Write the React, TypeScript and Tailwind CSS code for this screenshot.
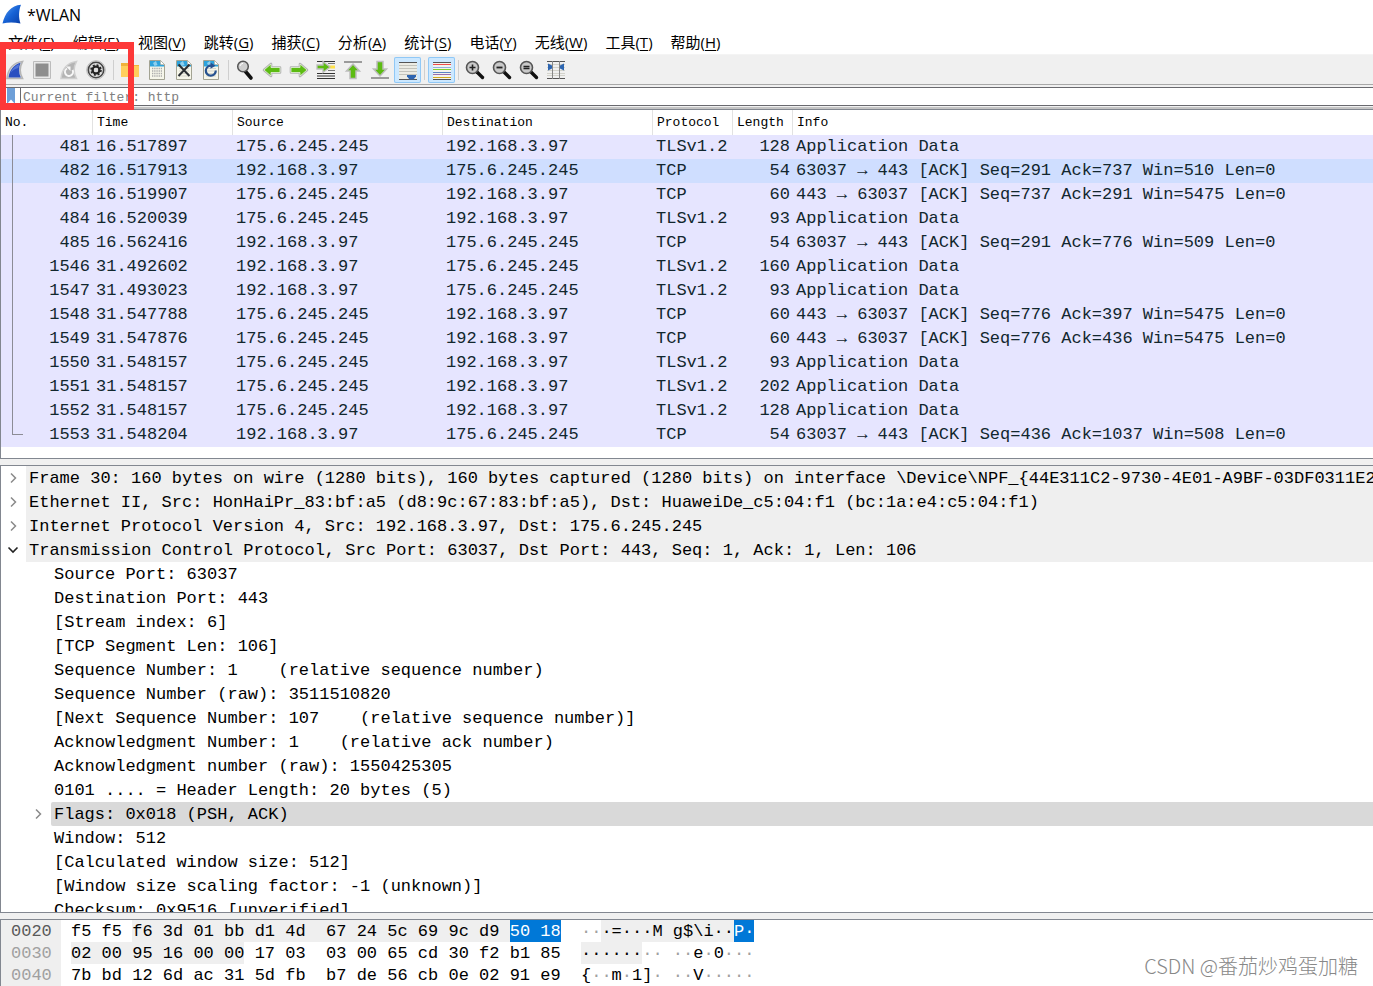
import { Fragment, ReactNode } from "react";

const MONO = "font-['Liberation_Mono',monospace]";
const UI = "font-['Open_Sans','Noto_Sans_CJK_SC',sans-serif]";

const menus: [string, string][] = [
  ["文件", "F"],
  ["编辑", "E"],
  ["视图", "V"],
  ["跳转", "G"],
  ["捕获", "C"],
  ["分析", "A"],
  ["统计", "S"],
  ["电话", "Y"],
  ["无线", "W"],
  ["工具", "T"],
  ["帮助", "H"],
];

const A = "175.6.245.245";
const B = "192.168.3.97";

type Packet = [number, string, string, string, string, number, string];

const packets: Packet[] = [
  [481, "16.517897", A, B, "TLSv1.2", 128, "Application Data"],
  [482, "16.517913", B, A, "TCP", 54, "63037 → 443 [ACK] Seq=291 Ack=737 Win=510 Len=0"],
  [483, "16.519907", A, B, "TCP", 60, "443 → 63037 [ACK] Seq=737 Ack=291 Win=5475 Len=0"],
  [484, "16.520039", A, B, "TLSv1.2", 93, "Application Data"],
  [485, "16.562416", B, A, "TCP", 54, "63037 → 443 [ACK] Seq=291 Ack=776 Win=509 Len=0"],
  [1546, "31.492602", B, A, "TLSv1.2", 160, "Application Data"],
  [1547, "31.493023", B, A, "TLSv1.2", 93, "Application Data"],
  [1548, "31.547788", A, B, "TCP", 60, "443 → 63037 [ACK] Seq=776 Ack=397 Win=5475 Len=0"],
  [1549, "31.547876", A, B, "TCP", 60, "443 → 63037 [ACK] Seq=776 Ack=436 Win=5475 Len=0"],
  [1550, "31.548157", A, B, "TLSv1.2", 93, "Application Data"],
  [1551, "31.548157", A, B, "TLSv1.2", 202, "Application Data"],
  [1552, "31.548157", A, B, "TLSv1.2", 128, "Application Data"],
  [1553, "31.548204", B, A, "TCP", 54, "63037 → 443 [ACK] Seq=436 Ack=1037 Win=508 Len=0"],
];

const layers = [
  "Frame 30: 160 bytes on wire (1280 bits), 160 bytes captured (1280 bits) on interface \\Device\\NPF_{44E311C2-9730-4E01-A9BF-03DF0311E201}, id 0",
  "Ethernet II, Src: HonHaiPr_83:bf:a5 (d8:9c:67:83:bf:a5), Dst: HuaweiDe_c5:04:f1 (bc:1a:e4:c5:04:f1)",
  "Internet Protocol Version 4, Src: 192.168.3.97, Dst: 175.6.245.245",
  "Transmission Control Protocol, Src Port: 63037, Dst Port: 443, Seq: 1, Ack: 1, Len: 106",
];

const fields = [
  "Source Port: 63037",
  "Destination Port: 443",
  "[Stream index: 6]",
  "[TCP Segment Len: 106]",
  "Sequence Number: 1    (relative sequence number)",
  "Sequence Number (raw): 3511510820",
  "[Next Sequence Number: 107    (relative sequence number)]",
  "Acknowledgment Number: 1    (relative ack number)",
  "Acknowledgment number (raw): 1550425305",
  "0101 .... = Header Length: 20 bytes (5)",
  "Flags: 0x018 (PSH, ACK)",
  "Window: 512",
  "[Calculated window size: 512]",
  "[Window size scaling factor: -1 (unknown)]",
  "Checksum: 0x9516 [unverified]",
];

const dim = "text-[#a0a0a0]";
const shade = "bg-[#efefef]";
const sel = "bg-[#0078d7] text-white";

type Span = [string, string?];

const hexRows: { offset: string; strong?: boolean; hex: Span[]; ascii: Span[] }[] = [
  {
    offset: "0020",
    strong: true,
    hex: [["f5 f5 "], ["f6 3d 01 bb d1 4d  67 24 5c 69 9c d9 ", shade], ["50 18", sel]],
    ascii: [["··", dim], ["·=···M g$\\i··", shade], ["P·", sel]],
  },
  {
    offset: "0030",
    hex: [["02 00 95 16 00 00", shade], [" 17 03  03 00 65 cd 30 f2 b1 85"]],
    ascii: [["······", shade], ["·· ··", dim], ["e"], ["·", dim], ["0"], ["···", dim]],
  },
  {
    offset: "0040",
    hex: [["7b bd 12 6d ac 31 5d fb  b7 de 56 cb 0e 02 91 e9"]],
    ascii: [["{"], ["··", dim], ["m"], ["·", dim], ["1]"], ["· ··", dim], ["V"], ["·····", dim]],
  },
];

function Icon({ children }: { children: ReactNode }) {
  return (
    <svg viewBox="0 0 24 24" className="size-6 shrink-0" fill="none" aria-hidden="true">
      {children}
    </svg>
  );
}

const FIN = "M4 20.500C5 11 10.500 4.500 19.500 3.500C16.500 9 16.500 15 19.500 20.500Z";

function Page({ children }: { children?: ReactNode }) {
  return (
    <Icon>
      <path d="M4.500 2.500h11l4 4v15h-15z" fill="#f6f6ea" stroke="#a3a393" />
      <path d="M5 3h10.300l.7 3.500L19 7v1.500H5z" fill="#2ea3dc" />
      <path d="M11 3l1.500 4-3 1L8 5z" fill="#8fd0ee" />
      <path d="M15.500 2.500v4h4z" fill="#fff" stroke="#a3a393" strokeWidth=".6" />
      {children}
    </Icon>
  );
}

function Lens({ children }: { children?: ReactNode }) {
  return (
    <Icon>
      <path d="M14 14l5.500 5.500" stroke="#111" strokeWidth="3.400" strokeLinecap="round" />
      <circle cx="9.500" cy="9.500" r="6" fill="#c9c9c9" stroke="#555" strokeWidth="1.600" />
      {children}
    </Icon>
  );
}

function Arrow({ rotate }: { rotate: number }) {
  return (
    <g transform={`rotate(${rotate} 12 12)`}>
      <path d="M4 12l7-6v3.500h9v5h-9v3.500z" fill="#5cbb12" stroke="#b3b3b3" strokeWidth="2.600" strokeLinejoin="round" />
      <path d="M4 12l7-6v3.500h9v5h-9v3.500z" fill="#5cbb12" stroke="#e6f2dc" strokeWidth=".8" strokeLinejoin="round" />
    </g>
  );
}

type Tool = { name: string; on?: boolean; icon: ReactNode } | null;

const tools: Tool[] = [
  {
    name: "开始捕获分组",
    icon: (
      <Icon>
        <path d={FIN} fill="#ddd" stroke="#b5b5b5" strokeWidth="1.600" />
        <path d="M5.500 19.500C6.500 12 11 6.500 17.500 4.800C15.500 10 15.600 15 17.800 19.500Z" fill="#2a4fc0" />
        <path d="M7.500 15C9 10.500 12.500 7.500 16.300 6L15.300 10C12 10.500 9.500 12.500 7.500 15Z" fill="#5375d8" />
      </Icon>
    ),
  },
  {
    name: "停止捕获分组",
    icon: (
      <Icon>
        <path d="M3.500 3.500h17v17h-17z" fill="#e9e9e9" stroke="#bcbcbc" />
        <path d="M5.500 5.500h13v13h-13z" fill="#8e8e8e" />
      </Icon>
    ),
  },
  {
    name: "重新开始当前捕获",
    icon: (
      <Icon>
        <path d={FIN} fill="#b4b4b4" stroke="#cfcfcf" strokeWidth="1.500" />
        <path d="M10 10.500a4 4 0 1 0 5.500 1.500" stroke="#f7f7f7" strokeWidth="2" />
        <path d="M9 8.500h4.500v4.500z" fill="#f7f7f7" />
      </Icon>
    ),
  },
  {
    name: "捕获选项",
    icon: (
      <Icon>
        <circle cx="12" cy="12" r="9.300" fill="#f5f5f5" stroke="#b8b8b8" />
        <circle cx="12" cy="12" r="7.700" fill="#dedede" stroke="#444" strokeWidth="1.600" />
        <circle cx="12" cy="12" r="3.400" stroke="#222" strokeWidth="2.400" />
        <circle cx="12" cy="12" r="5" stroke="#222" strokeWidth="1.500" strokeDasharray="2 1.927" />
        <circle cx="12" cy="12" r="2.200" fill="#ddd" />
      </Icon>
    ),
  },
  null,
  {
    name: "打开",
    icon: (
      <Icon>
        <path d="M3 5h7l2 2h9v12H3z" fill="#f0b23c" />
        <path d="M3 8h18v11H3z" fill="#ffcf5c" />
      </Icon>
    ),
  },
  {
    name: "保存",
    icon: (
      <Page>
        <path d="M7 10.500h10M7 13h10M7 15.500h10M7 18h10" stroke="#aaa" strokeWidth="1.300" strokeDasharray="1.300 .9" />
      </Page>
    ),
  },
  {
    name: "关闭",
    icon: (
      <Page>
        <path d="M7 10.500h10M7 13h10M7 15.500h10M7 18h10" stroke="#d5d5cb" />
        <path d="M6.500 6.500l11 11.500M17.500 6.500l-11 11.500" stroke="#2b2f33" strokeWidth="2" />
      </Page>
    ),
  },
  {
    name: "重新加载",
    icon: (
      <Page>
        <path d="M7 10.500h10M7 13h10M7 15.500h10M7 18h10" stroke="#d5d5cb" />
        <path d="M16.800 12.500a5 5 0 1 1-4.300-4.800" stroke="#27528f" strokeWidth="2.200" />
        <path d="M11.500 4.500l5 3.300-5 3z" fill="#27528f" />
      </Page>
    ),
  },
  null,
  {
    name: "查找分组",
    icon: (
      <Icon>
        <path d="M12.500 13.500l5.500 6.500" stroke="#111" strokeWidth="3.600" strokeLinecap="round" />
        <circle cx="10" cy="8.500" r="5.300" fill="#cfcfcf" stroke="#555" strokeWidth="1.500" />
        <path d="M7 8a3.500 3.500 0 0 1 3-2.700" stroke="#fff" />
      </Icon>
    ),
  },
  { name: "前一分组", icon: <Icon><Arrow rotate={0} /></Icon> },
  { name: "后一分组", icon: <Icon><Arrow rotate={180} /></Icon> },
  {
    name: "转到特定分组",
    icon: (
      <Icon>
        <path d="M3 3.500h18M3 15.500h18M3 18h18M3 20.500h18" stroke="#333" strokeWidth="1.200" />
        <path d="M14 5.500h7M14 12.500h7" stroke="#777" />
        <path d="M14 9h7" stroke="#ffe14a" strokeWidth="3" />
        <path d="M3 7h6V3.500L16 9l-7 5.500V11H3z" fill="#5cbb12" stroke="#bdbdbd" strokeWidth="1.300" />
      </Icon>
    ),
  },
  {
    name: "首个分组",
    icon: (
      <Icon>
        <path d="M3 4h18" stroke="#9b9b9b" strokeWidth="2" />
        <path d="M12 6l6.500 7h-3.500v7.500H9V13H5.500z" fill="#5cbb12" stroke="#bdbdbd" strokeWidth="1.500" />
      </Icon>
    ),
  },
  {
    name: "最新分组",
    icon: (
      <Icon>
        <path d="M3 20h18" stroke="#9b9b9b" strokeWidth="2" />
        <path d="M12 18l6.500-7h-3.500V3.500H9V11H5.500z" fill="#5cbb12" stroke="#bdbdbd" strokeWidth="1.500" />
      </Icon>
    ),
  },
  {
    name: "自动滚动",
    on: true,
    icon: (
      <Icon>
        <path d="M4 5h18v16H4z" fill="#ecece4" />
        <path d="M4 7.500h18M4 10.500h18M4 13.500h18M4 16.500h18" stroke="#c3c3bb" />
        <path d="M4 4.500h18M4 21.500h18" stroke="#555" />
        <path d="M12 17h9v1.500l-2.500 3h-4l-2.500-3z" fill="#2e66b1" />
      </Icon>
    ),
  },
  null,
  {
    name: "分组着色",
    on: true,
    icon: (
      <Icon>
        <path d="M4 4h18v18H4z" fill="#f3f3ee" />
        <path d="M4 4.500h18M4 21.500h18" stroke="#555" />
        <path d="M4 6.500h18" stroke="#ee4b4b" />
        <path d="M4 9.500h18" stroke="#8fb0dd" />
        <path d="M4 11.500h18" stroke="#7fce2f" />
        <path d="M4 14.500h18" stroke="#5b84c4" />
        <path d="M4 16.500h18" stroke="#9a6fae" />
        <path d="M4 19.500h18" stroke="#d3a91c" />
      </Icon>
    ),
  },
  null,
  { name: "放大", icon: <Lens><path d="M6.500 9.500h6M9.500 6.500v6" stroke="#222" strokeWidth="1.600" /></Lens> },
  { name: "缩小", icon: <Lens><path d="M6.500 9.500h6" stroke="#222" strokeWidth="1.800" /></Lens> },
  {
    name: "正常大小",
    icon: <Lens><path d="M6.500 8.500h6M6.500 10.500h6" stroke="#222" strokeWidth="1.300" /></Lens>,
  },
  {
    name: "调整列宽",
    icon: (
      <Icon>
        <path d="M3 6.500h18M3 9.500h18M3 12.500h18M3 15.500h18M3 17.500h18" stroke="#d3d3cb" />
        <path d="M3 3.500h18M3 20.500h18" stroke="#555" />
        <path d="M8.500 3v18M15.500 3v18" stroke="#888" />
        <path d="M4 5.500l4 2v3l-4 2zM20 5.500l-4 2v3l4 2z" fill="#2e66b1" />
      </Icon>
    ),
  },
];

function Chevron({ open = false }: { open?: boolean }) {
  return (
    <svg viewBox="0 0 12 12" className="size-3" fill="none" aria-hidden="true">
      {open ? (
        <path d="M1.500 3.500L6 8l4.500-4.500" stroke="#222" strokeWidth="1.600" />
      ) : (
        <path d="M4 1.500L8.500 6 4 10.500" stroke="#8a8a8a" strokeWidth="1.500" />
      )}
    </svg>
  );
}

function Spans({ items }: { items: Span[] }) {
  return (
    <>
      {items.map(([text, cls], i) => (
        <span key={i} className={cls}>
          {text}
        </span>
      ))}
    </>
  );
}

function PacketList() {
  const head = "border-r border-[#e2e2e2] pl-1 text-left font-normal";
  return (
    <section className="shrink-0 border-y border-l border-[#828790] bg-white pb-[11px]">
      <table className={`w-full table-fixed border-separate border-spacing-0 whitespace-nowrap ${MONO}`}>
        <colgroup>
          <col className="w-[92px]" />
          <col className="w-[140px]" />
          <col className="w-[210px]" />
          <col className="w-[210px]" />
          <col className="w-[80px]" />
          <col className="w-[60px]" />
          <col />
        </colgroup>
        <thead>
          <tr className="h-[25px] text-[13px] leading-5 text-black">
            <th className={head}>No.</th>
            <th className={head}>Time</th>
            <th className={head}>Source</th>
            <th className={head}>Destination</th>
            <th className={head}>Protocol</th>
            <th className={head}>Length</th>
            <th className="pl-1 text-left font-normal">Info</th>
          </tr>
        </thead>
        <tbody className="text-[17px] leading-6 text-[#12272e]">
          {packets.map(([no, time, src, dst, proto, len, info], i) => (
            <tr key={no} className={no === 482 ? "h-6 bg-[#cfdeff]" : "h-6 bg-[#e6e5ff]"}>
              <td className="p-0">
                <div className="flex h-6 justify-between pr-[3px] pl-[11px]">
                  <span
                    className={
                      i === packets.length - 1
                        ? "h-3 w-[11px] border-b border-l border-[#8c8c96]"
                        : "h-6 w-[11px] border-l border-[#8c8c96]"
                    }
                  />
                  <span>{no}</span>
                </div>
              </td>
              <td className="p-0 pl-[3px]">{time}</td>
              <td className="p-0 pl-[3px]">{src}</td>
              <td className="p-0 pl-[3px]">{dst}</td>
              <td className="p-0 pl-[3px]">{proto}</td>
              <td className="p-0 pr-[3px] text-right">{len}</td>
              <td className="p-0 pl-[3px]">{info}</td>
            </tr>
          ))}
        </tbody>
      </table>
    </section>
  );
}

function Details() {
  return (
    <section
      className={`min-h-0 flex-1 overflow-hidden border-y border-l border-[#828790] bg-white text-[17px] leading-[26px] whitespace-pre text-black ${MONO}`}
    >
      <ul>
        {layers.map((text, i) => (
          <li key={text} className="flex h-6">
            <button aria-label="展开" className="flex w-[25px] shrink-0 items-center pl-1.5">
              <Chevron open={i === 3} />
            </button>
            <span className="min-w-0 flex-1 overflow-hidden bg-[#efefef] pl-[3px]">{text}</span>
          </li>
        ))}
        {fields.map((text) => {
          const flags = text.startsWith("Flags");
          return (
            <li key={text} className="flex h-6">
              <span className="flex w-[50px] shrink-0 items-center pl-[31px]">
                {flags && (
                  <button aria-label="展开">
                    <Chevron />
                  </button>
                )}
              </span>
              <span className={flags ? "flex-1 rounded-l-xs bg-[#d9d9d9] pl-[3px]" : "flex-1 pl-[3px]"}>{text}</span>
            </li>
          );
        })}
      </ul>
    </section>
  );
}

function Bytes() {
  return (
    <section
      className={`shrink-0 border-t border-l border-[#828790] bg-white text-[17px] leading-6 whitespace-pre text-black ${MONO}`}
    >
      {hexRows.map((row) => (
        <div key={row.offset} className="flex h-[22px]">
          <span className={`w-[60px] bg-[#efefef] pl-2.5 ${row.strong ? "text-[#5a5a5a]" : "text-[#a0a0a0]"}`}>
            {row.offset}
          </span>
          <span className="flex w-[510px] pl-2.5">
            <Spans items={row.hex} />
          </span>
          <span className="flex pl-2.5">
            <Spans items={row.ascii} />
          </span>
        </div>
      ))}
    </section>
  );
}

export default function App() {
  return (
    <div className={`relative flex h-screen flex-col overflow-hidden bg-[#f0f0f0] text-black ${UI}`}>
      <header className="shrink-0 bg-white">
        <div className="flex h-[29px] items-center gap-1 pl-0.5 text-[16px]">
          <svg viewBox="0 0 21 21" className="size-[21px]" aria-hidden="true">
            <defs>
              <linearGradient id="fin" x1="0" y1="0" x2="1" y2="1">
                <stop offset="0" stopColor="#5fa0ee" />
                <stop offset=".5" stopColor="#1763d6" />
                <stop offset="1" stopColor="#0a3fa8" />
              </linearGradient>
            </defs>
            <path d="M.5 19.500C3 9 9 1.500 19 .8C16.500 7 16.500 14 18.500 19.500C12 18 6 18 .5 19.500Z" fill="url(#fin)" />
          </svg>
          <h1>*WLAN</h1>
        </div>
        <nav className="flex h-[25px] items-center gap-0.5 text-[15px] leading-6">
          {menus.map(([label, key]) => (
            <button key={key} className="px-2 whitespace-nowrap">
              {label}(<u className="underline-offset-2">{key}</u>)
            </button>
          ))}
        </nav>
      </header>

      <div className="flex h-[31px] shrink-0 items-center border-t border-b border-t-[#f4f4f4] border-b-[#a8a8a8] pl-0.5">
        {tools.map((tool, i) => (
          <Fragment key={i}>
            {tool ? (
              <button
                aria-label={tool.name}
                className={
                  tool.on
                    ? "flex h-[26px] w-[27px] items-center rounded-xs bg-[#cce8ff] pl-px inset-ring inset-ring-[#90c8f6]"
                    : "flex h-[26px] w-[27px] items-center pl-px"
                }
              >
                {tool.icon}
              </button>
            ) : (
              <span className="mx-[3px] h-5 w-px bg-[#cfcfcf]" />
            )}
          </Fragment>
        ))}
      </div>

      <div className="shrink-0 border-b-2 border-[#c4c4c4] bg-[#f0f0f0] pt-0.5 pb-px">
        <label className="flex h-[19px] items-stretch border-y border-[#69696e] bg-white">
          <svg viewBox="0 0 8 16" className="ml-[7px] h-4 w-2" aria-label="书签">
            <path d="M0 0h8v16L4 11.500 0 16z" fill="#6d9fd8" />
          </svg>
          <span className="ml-[5px] w-px bg-[#69696e]" />
          <input
            defaultValue="Current filter: http"
            aria-label="显示过滤器"
            className={`min-w-0 flex-1 bg-transparent pt-0.5 pl-0.5 text-[13px] leading-4 text-[#808080] outline-none ${MONO}`}
          />
        </label>
      </div>

      <PacketList />
      <div className="h-1.5 shrink-0" />
      <Details />
      <div className="h-1.5 shrink-0" />
      <Bytes />

      <div className="pointer-events-none absolute top-[42px] left-0 h-[68px] w-[134px] border-x-[6px] border-y-[7px] border-[#fd3838]" />
      <p className="pointer-events-none absolute right-[15px] bottom-1.5 font-['Noto_Sans_CJK_SC',sans-serif] text-[20px] leading-7 font-light text-[#888]">
        CSDN @番茄炒鸡蛋加糖
      </p>
    </div>
  );
}
